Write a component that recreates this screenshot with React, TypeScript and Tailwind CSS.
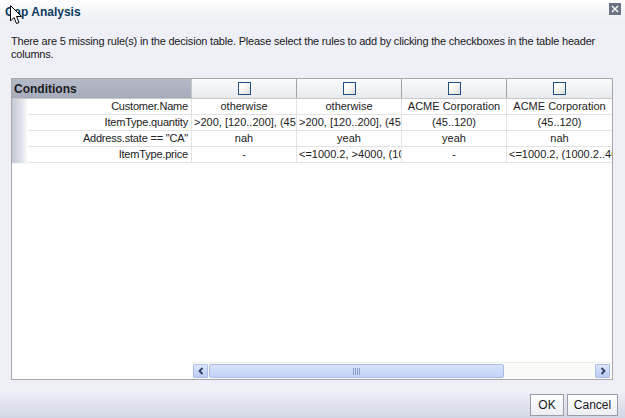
import React from "react";

const cols = [
  { name: "otherwise", qty: ">200, [120..200], (45..120)", st: "nah", price: "-" },
  { name: "otherwise", qty: ">200, [120..200], (45..120)", st: "yeah", price: "<=1000.2, >4000, (1000.2..4000]" },
  { name: "ACME Corporation", qty: "(45..120)", st: "yeah", price: "-" },
  { name: "ACME Corporation", qty: "(45..120)", st: "nah", price: "<=1000.2, (1000.2..4000]" },
];

const labels = ["Customer.Name", "ItemType.quantity", 'Address.state == "CA"', "ItemType.price"];

function Check() {
  return (
    <div className="w-[13px] h-[13px] border border-[#1e5085] bg-[linear-gradient(135deg,#ffffff_30%,#dcdcd6_100%)]" />
  );
}

export default function App() {
  return (
    <div className="w-[625px] h-[418px] bg-[#eeeff7] flex flex-col relative overflow-hidden text-[#222]" style={{ fontFamily: "'Liberation Sans', Arial, sans-serif" }}>
      {/* Title bar */}
      <div className="h-[24px] flex items-center justify-between pl-[5px] pr-[4px] bg-[linear-gradient(#ffffff,#f3f4f8_60%,#eceef5)]">
        <span className="text-[12px] font-bold text-[#0c3b5f]">Gap Analysis</span>
        <div className="w-[12px] h-[12px] bg-[#6b7385] flex items-center justify-center mb-[6px]">
          <svg width="8" height="8" viewBox="0 0 8 8">
            <path d="M1 1L7 7M7 1L1 7" stroke="#fff" strokeWidth="1.4" />
          </svg>
        </div>
      </div>

      {/* Intro */}
      <div className="px-[11px] pt-[11px] text-[11px] leading-[13px] tracking-[-0.2px] text-[#1a1a1a] w-[620px]">
        There are 5 missing rule(s) in the decision table. Please select the rules to add by clicking the checkboxes in the table header columns.
      </div>

      {/* Table panel */}
      <div className="ml-[11px] mt-[17px] w-[602px] h-[302px] border border-[#a8a8a8] bg-white flex flex-col">
        <div className="flex-1 text-[11px]">
          {/* header */}
          <div className="flex h-[20px] border-b border-[#c8c8c8]">
            <div className="w-[180px] bg-[linear-gradient(#b4bac8,#a6acbb)] flex items-center pl-[2px] font-bold text-[12px] text-[#1c1c1c] border-r border-[#c8c8c8]">
              Conditions
            </div>
            {cols.map((c, i) => (
              <div key={i} className={`w-[105px] flex items-center justify-center bg-[linear-gradient(#fafbfc,#e8eaee)] ${i < 3 ? "border-r border-[#a3a3a3]" : ""}`}>
                <Check />
              </div>
            ))}
          </div>
          {labels.map((l, r) => (
            <div key={r} className="flex h-[16px] border-b border-[#e3e3e3]">
              <div className="w-[180px] flex border-r border-[#e3e3e3] relative">
                <div className="w-[16px] h-[17px] -mb-[1px] bg-[linear-gradient(90deg,#c2c7d3,#dfe2e9_60%,#ffffff)] border-b border-[#f4f5f8]" />
                <div className="flex-1 text-right pr-[3px] leading-[15px] whitespace-nowrap tracking-[-0.2px]">{l}</div>
              </div>
              {cols.map((c, i) => {
                const v = [c.name, c.qty, c.st, c.price][r];
                return (
                  <div key={i} className={`w-[105px] overflow-hidden whitespace-nowrap leading-[15px] ${v.length > 17 ? "text-left pl-[2px]" : "text-center"} ${i < 3 ? "border-r border-[#e3e3e3]" : ""}`}>
                    {v}
                  </div>
                );
              })}
            </div>
          ))}
        </div>
        {/* scrollbar */}
        <div className="h-[17px] flex pb-[1px]">
          <div className="w-[180px]" />
          <div className="flex-1 flex items-stretch bg-[#fafaf6] border-t border-[#eeeeea] pt-[1px]">
            <div className="w-[15px] ml-[1px] bg-[linear-gradient(#dfe7fb,#b9cbf3)] border border-[#aabde6] flex items-center justify-center rounded-[1px]">
              <svg width="6" height="8" viewBox="0 0 6 8"><path d="M4.5 1L1.5 4L4.5 7" stroke="#2f3f66" strokeWidth="1.8" fill="none" /></svg>
            </div>
            <div className="w-[295px] ml-[1px] bg-[linear-gradient(#d7e2fb,#c3d3f7)] border border-[#a9bce4] rounded-[2px] flex items-center justify-center">
              <div className="flex gap-[1px]">
                {[0, 1, 2, 3].map((k) => (
                  <div key={k} className="w-[1px] h-[7px] bg-[#8a9cc4]" />
                ))}
              </div>
            </div>
            <div className="flex-1" />
            <div className="w-[15px] mr-[2px] bg-[linear-gradient(#dfe7fb,#b9cbf3)] border border-[#aabde6] flex items-center justify-center rounded-[1px]">
              <svg width="6" height="8" viewBox="0 0 6 8"><path d="M1.5 1L4.5 4L1.5 7" stroke="#2f3f66" strokeWidth="1.8" fill="none" /></svg>
            </div>
          </div>
        </div>
      </div>

      {/* Footer */}
      <div className="flex-1 bg-[linear-gradient(#eeeff7_30%,#d2d7e5)] flex justify-end items-start pt-[14px] pr-[7px] gap-[3px] text-[12px]">
        <button className="w-[34px] h-[22px] border border-[#9a9ea8] bg-[linear-gradient(#ffffff,#eceef3)] text-[#1a1a1a]">OK</button>
        <button className="w-[51px] h-[22px] border border-[#9a9ea8] bg-[linear-gradient(#ffffff,#eceef3)] text-[#1a1a1a]">Cancel</button>
      </div>

      {/* mouse cursor */}
      <svg className="absolute left-[10px] top-[5px]" width="13" height="20" viewBox="0 0 13 20">
        <path d="M0.5 0.5 L0.5 16 L4 12.5 L6.5 18.5 L9 17.5 L6.5 11.5 L11.5 11.5 Z" fill="#fff" stroke="#000" strokeWidth="1" />
      </svg>
    </div>
  );
}
